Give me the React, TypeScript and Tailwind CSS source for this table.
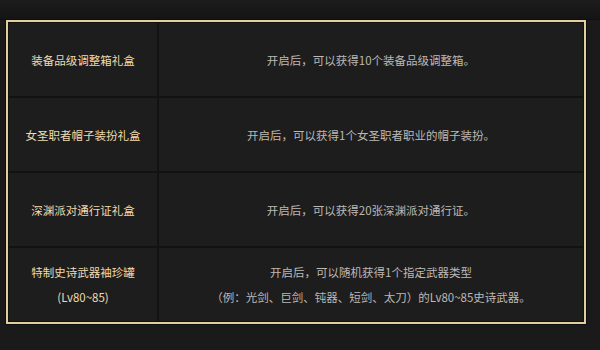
import React from "react";

const rows: { left: React.ReactNode; right: React.ReactNode; h: string }[] = [
  { left: "装备品级调整箱礼盒", right: "开启后，可以获得10个装备品级调整箱。", h: "h-[75px] border-b-2" },
  { left: "女圣职者帽子装扮礼盒", right: "开启后，可以获得1个女圣职者职业的帽子装扮。", h: "h-[75px] border-b-2" },
  { left: "深渊派对通行证礼盒", right: "开启后，可以获得20张深渊派对通行证。", h: "h-[75px] border-b-2" },
  {
    left: (
      <>
        <div>特制史诗武器袖珍罐</div>
        <div className="mt-[11px]">(Lv80~85)</div>
      </>
    ),
    right: (
      <>
        <div>开启后，可以随机获得1个指定武器类型</div>
        <div className="mt-[11px]">（例：光剑、巨剑、钝器、短剑、太刀）的Lv80~85史诗武器。</div>
      </>
    ),
    h: "h-[73px]",
  },
];

export default function App() {
  return (
    <div
      className="w-[600px] h-[350px] bg-[#1b1a1b] overflow-hidden"
      style={{ fontFamily: '"Noto Sans CJK SC", "Noto Sans", sans-serif' }}
    >
      <div className="h-[20px] bg-gradient-to-b from-[#1d1d1d] to-[#141414] border-b border-[#101010]" />
      <div className="ml-[6px] w-[580px] border-2 border-[#e2cf9f] shadow-[0_0_0_1px_#0e0e0e] bg-[#1e1d1e]">
        <div className="border border-[#111]">
          {rows.map((r, i) => (
            <div key={i} className={`flex border-[#121212] ${r.h}`}>
              <div className="w-[150px] border-r-2 border-[#121212] flex flex-col items-center justify-center text-[11.5px] leading-[14px] text-[#eedbae]">
                {r.left}
              </div>
              <div className="flex-1 flex flex-col items-center justify-center text-[11.5px] leading-[14px] text-[#bcb9b5]">
                {r.right}
              </div>
            </div>
          ))}
        </div>
      </div>
    </div>
  );
}
